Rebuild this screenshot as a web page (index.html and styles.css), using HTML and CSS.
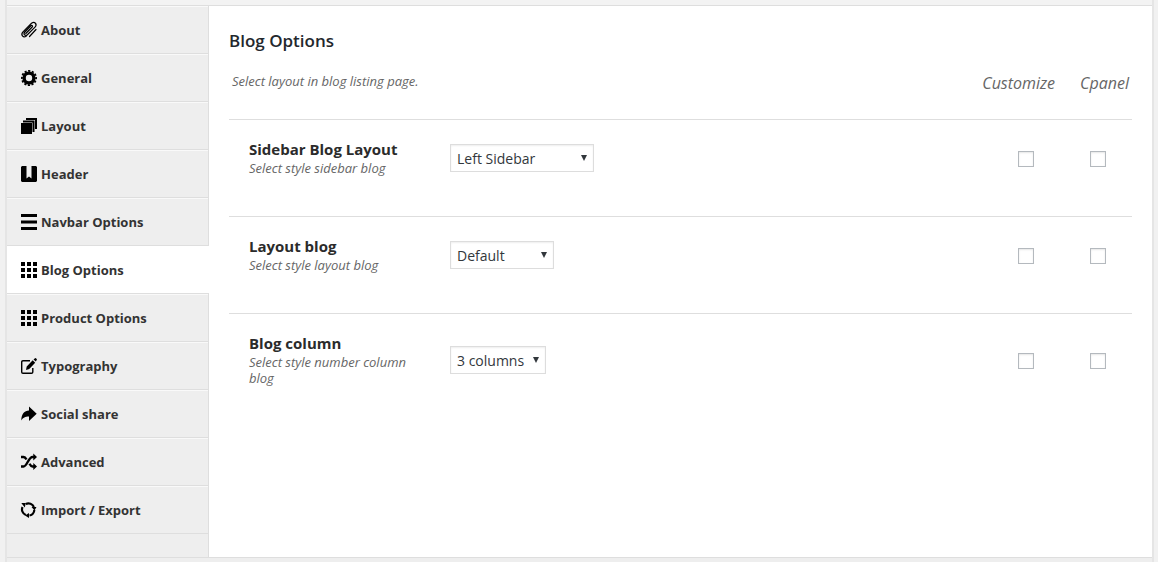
FILE: index.html
```html
<!DOCTYPE html>
<html lang="en">
<head>
<meta charset="utf-8">
<title>Blog Options</title>
<link rel="stylesheet" href="styles.css">
</head>
<body>
<div class="frame">
  <div class="topbar"></div>
  <div class="panel">
    <nav class="sidebar">
      <ul class="menu">
        <li><a class="item" href="#about"><svg class="icon outline" viewBox="0 0 16 16"><path d="M4.800 11.500 11.200 5c.9-1.100-.2-2.200-1.300-1.200L3.800 10c-2 2.300.5 4.600 2.600 2.700L14 5.200C16.700 2 13.500-.8 10.500 1.300L2 9.800C-.8 13 2.300 16.200 5.200 14.300M8.500 14.500 15 7.500"/></svg>About</a></li>
        <li><a class="item" href="#general"><svg class="icon" viewBox="0 0 16 16"><circle cx="8" cy="8" r="4.900" fill="none" stroke="#000" stroke-width="3.400"/><circle cx="8" cy="8" r="7.100" fill="none" stroke="#000" stroke-width="1.800" stroke-dasharray="2.200 1.517" stroke-dashoffset="1.100"/></svg>General</a></li>
        <li><a class="item" href="#layout"><svg class="icon" viewBox="0 0 16 16"><path d="M0 5h11v11H0z"/><path d="M2 2.500h11.500V14h-2V4.500H2z"/><path d="M5 0h11v11h-2V2H5z"/></svg>Layout</a></li>
        <li><a class="item" href="#header"><svg class="icon" viewBox="0 0 16 16"><path d="M1 0h4.500v12.500L8 10.500l2.500 2V0H15l1 1v14l-1 1H1l-1-1V1z"/></svg>Header</a></li>
        <li><a class="item" href="#navbar"><svg class="icon" viewBox="0 0 16 16"><path d="M0 0h16v3H0zM0 6.500h16v3H0zM0 13h16v3H0z"/></svg>Navbar Options</a></li>
        <li><a class="item current" href="#blog" aria-current="page"><svg class="icon" viewBox="0 0 16 16"><path d="M0 0h4v4H0zM6 0h4v4H6zM12 0h4v4h-4zM0 6h4v4H0zM6 6h4v4H6zM12 6h4v4h-4zM0 12h4v4H0zM6 12h4v4H6zM12 12h4v4h-4z"/></svg>Blog Options</a></li>
        <li><a class="item" href="#product"><svg class="icon" viewBox="0 0 16 16"><path d="M0 0h4v4H0zM6 0h4v4H6zM12 0h4v4h-4zM0 6h4v4H0zM6 6h4v4H6zM12 6h4v4h-4zM0 12h4v4H0zM6 12h4v4H6zM12 12h4v4h-4z"/></svg>Product Options</a></li>
        <li><a class="item" href="#typography"><svg class="icon" viewBox="0 0 16 16"><path d="M9 2.700H2Q.7 2.700.7 4v10Q.7 15.300 2 15.300h8.500q1.300 0 1.300-1.300v-4" fill="none" stroke="#000" stroke-width="1.400"/><path d="M5 12l.7-3.500 6-6.200 2.500 2.500-6 6.200zM12.500 1.500 14 .2q.6-.4 1.200.2l.5.600q.5.500 0 1.100L14.800 3.600z"/></svg>Typography</a></li>
        <li><a class="item" href="#social"><svg class="icon" viewBox="0 0 16 16"><path d="M8 .5v4C3.500 4.500.3 8 .3 14.500 2.200 11.500 4 10.500 8 10.500v4.500l7.700-7.300z"/></svg>Social share</a></li>
        <li><a class="item" href="#advanced"><svg class="icon" viewBox="0 0 16 16"><path d="M0 3h2.500c1.500 0 2.200 1 3 2.500M8.500 9.800c.9 1.700 1.500 2.700 3 2.700H14M0 12.500h2.500C6 12.500 7.500 3 11.500 3H13" fill="none" stroke="#000" stroke-width="2.400"/><path d="M12.300-.500 16 3l-3.700 3.500zM12.300 9l3.700 3.500-3.700 3.500z"/></svg>Advanced</a></li>
        <li><a class="item" href="#import"><svg class="icon" viewBox="0 0 16 16"><path d="M4.800 2A6 6 0 0 1 12.900 5M13.300 8A6 6 0 0 1 8.500 13.500M4.800 13A6 6 0 0 1 1.500 5" fill="none" stroke="#000" stroke-width="2.200"/><path d="M10.500 5H15.500L13.500 8.500zM8 11v5L4 13.500zM.3 1 4.800 1 3.800 5.500z"/></svg>Import / Export</a></li>
      </ul>
    </nav>
    <main class="content">
      <h1 class="title">Blog Options</h1>
      <div class="intro">
        <p class="note">Select layout in blog listing page.</p>
        <div class="heads"><span>Customize</span><span>Cpanel</span></div>
      </div>
      <div class="row">
        <div class="label"><label class="name" for="sidebar-layout">Sidebar Blog Layout</label><p class="help">Select style sidebar blog</p></div>
        <div class="field"><span class="select"><select class="box wide" id="sidebar-layout"><option>Left Sidebar</option></select></span></div>
        <div class="checks"><input class="check" type="checkbox" aria-label="Customize sidebar blog layout"><input class="check" type="checkbox" aria-label="Cpanel sidebar blog layout"></div>
      </div>
      <div class="row">
        <div class="label"><label class="name" for="layout-blog">Layout blog</label><p class="help">Select style layout blog</p></div>
        <div class="field"><span class="select"><select class="box medium" id="layout-blog"><option>Default</option></select></span></div>
        <div class="checks"><input class="check" type="checkbox" aria-label="Customize layout blog"><input class="check" type="checkbox" aria-label="Cpanel layout blog"></div>
      </div>
      <div class="row">
        <div class="label"><label class="name" for="blog-column">Blog column</label><p class="help">Select style number column blog</p></div>
        <div class="field"><span class="select"><select class="box narrow" id="blog-column"><option>3 columns</option></select></span></div>
        <div class="checks"><input class="check" type="checkbox" aria-label="Customize blog column"><input class="check" type="checkbox" aria-label="Cpanel blog column"></div>
      </div>
    </main>
  </div>
</div>
</body>
</html>
```
FILE: styles.css
```css
* { box-sizing: border-box; }

body {
  margin: 0;
  background: #f1f1f1;
  color: #32373c;
  font-family: "Open Sans", "Liberation Sans", sans-serif;
  font-size: 13px;
}

.frame {
  display: flex;
  flex-direction: column;
  min-height: 100vh;
  margin: 0 4px 0 5px;
  padding-bottom: 4px;
  border: solid #e5e5e5;
  border-width: 0 2px;
  background: #eee;
}

.topbar { height: 5px; background: #f3f3f3; }

.panel {
  flex: 1;
  display: grid;
  grid-template-columns: 202px 1fr;
  border: solid #dedede;
  border-width: 1px 0;
  background: #fff;
}

.sidebar { border-right: 1px solid #dedede; background: #eee; }

.menu { margin: 0; padding: 0; list-style: none; }

.item {
  display: flex;
  align-items: center;
  gap: 4px;
  height: 48px;
  padding-left: 14px;
  border-top: 1px solid #f9f9f9;
  border-bottom: 1px solid #dedede;
  color: #333;
  font-weight: 700;
  text-decoration: none;
}

.item.current {
  margin-right: -1px;
  border-top-color: #fff;
  background: #fff;
}

.icon { flex: none; width: 16px; height: 16px; fill: #000; overflow: visible; }
.outline { fill: none; stroke: #000; stroke-width: 1.2; stroke-linecap: round; }

.content { padding: 24px 20px; }

.title {
  margin: 0;
  color: #23282d;
  font-size: 17px;
  font-weight: 600;
  line-height: 22px;
}

.intro {
  display: flex;
  justify-content: space-between;
  height: 67px;
  padding: 20px 3px 0;
  color: #666;
  font-style: italic;
}

.note { margin: 0; line-height: 18px; }

.heads { display: flex; gap: 25px; font-size: 16px; line-height: 22px; }

.row {
  display: flex;
  align-items: center;
  padding: 20px 26px 40px 20px;
  border-top: 1px solid #dedede;
}

.label { width: 200px; padding-right: 24px; }

.name {
  display: block;
  padding-bottom: 2px;
  color: #2b2b2b;
  font-size: 15px;
  font-weight: 700;
  line-height: 18px;
}

.help { margin: 0; color: #666; font-style: italic; line-height: 16px; }

.field { flex: 1; }

.select { display: inline-block; position: relative; vertical-align: top; }

.select::after {
  content: "";
  position: absolute;
  top: 11px;
  right: 7px;
  width: 6px;
  height: 6px;
  background: #32373c;
  clip-path: polygon(0 0, 100% 0, 50% 100%);
  pointer-events: none;
}

.box {
  display: block;
  appearance: none;
  height: 28px;
  margin-left: 1px;
  padding: 0 6px;
  border: 1px solid #ddd;
  border-radius: 0;
  background: #fff;
  box-shadow: inset 0 1px 2px rgba(0, 0, 0, 0.07);
  color: #32373c;
  font-family: inherit;
  font-size: 14px;
}

.wide { width: 144px; }
.medium { width: 104px; }
.narrow { width: 96px; }

.checks { display: flex; gap: 56px; padding-top: 2px; }

.check {
  appearance: none;
  width: 16px;
  height: 16px;
  margin: 0;
  border: 1px solid #b4b9be;
  background: #fff;
  box-shadow: inset 0 1px 2px rgba(0, 0, 0, 0.1);
}

.check:checked { background: #32373c; }
```
